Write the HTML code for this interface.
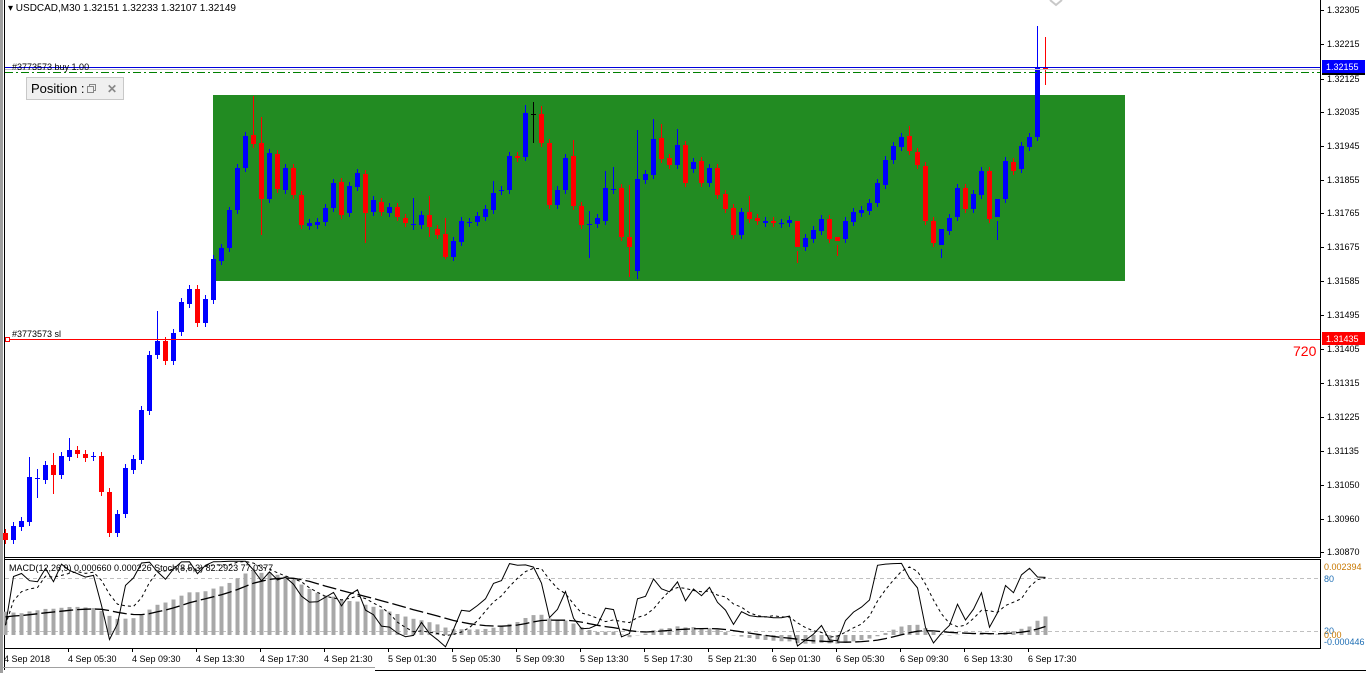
<!DOCTYPE html>
<html><head><meta charset="utf-8"><style>
body{margin:0;width:1366px;height:673px;overflow:hidden;background:#fff;font-family:"Liberation Sans",sans-serif}
svg text{font-family:"Liberation Sans",sans-serif}
</style></head><body>
<svg id="s" width="1366" height="673" xmlns="http://www.w3.org/2000/svg">
<rect x="0" y="0" width="1366" height="673" fill="#fff"/>
<rect x="0" y="0" width="3" height="673" fill="#a0a0a0"/>
<line x1="4.5" y1="0" x2="4.5" y2="670" stroke="#000"/>
<rect x="213" y="95" width="912" height="186" fill="#228B22"/>
<g id="candles"></g>
<line x1="5" y1="67.5" x2="1320" y2="67.5" stroke="#0000dd"/>
<line x1="5" y1="69.5" x2="1320" y2="69.5" stroke="#c0c0c0"/>
<line x1="5" y1="72.5" x2="1320" y2="72.5" stroke="#008000" stroke-dasharray="8,3,2,3"/>
<line x1="5" y1="339.5" x2="1320" y2="339.5" stroke="#ff0000"/>
<rect x="5.5" y="337.5" width="4" height="4" fill="#fff" stroke="#f00"/>
<text x="12" y="70" font-size="9" fill="#000">#3773573 buy 1.00</text>
<text x="12" y="337" font-size="9" fill="#000">#3773573 sl</text>
<text x="1293" y="356" font-size="14" fill="#f00">720</text>
<text x="8" y="11" font-size="10" fill="#000">▾ USDCAD,M30  1.32151 1.32233 1.32107 1.32149</text>
<rect x="26.5" y="77.5" width="97" height="22" fill="#f0f0f0" stroke="#c8c8c8"/>
<text x="31" y="93" font-size="13" fill="#000">Position :</text>
<rect x="88" y="84" width="9" height="9" fill="#f0f0f0"/>
<rect x="89.5" y="84.5" width="6" height="6" fill="none" stroke="#888"/>
<rect x="87.5" y="86.5" width="6" height="6" fill="#f0f0f0" stroke="#888"/>
<text x="107" y="93" font-size="12" fill="#888" font-weight="bold">✕</text>
<path d="M1050 0 L1056 5 L1062 0" fill="none" stroke="#c8c8c8" stroke-width="2"/>
<line x1="1320.5" y1="0" x2="1320.5" y2="558" stroke="#000"/>
<line x1="5" y1="557.5" x2="1320" y2="557.5" stroke="#000"/>
<g id="axis" font-size="9" fill="#000"></g>
<rect x="1322" y="60" width="43" height="13" fill="#0000ff"/>
<text x="1326" y="70" font-size="9" fill="#fff">1.32155</text>
<rect x="1322" y="73" width="43" height="2" fill="#000"/>
<rect x="1322" y="332" width="43" height="13" fill="#ff0000"/>
<text x="1326" y="342" font-size="9" fill="#fff">1.31435</text>
<line x1="5" y1="559.5" x2="1320" y2="559.5" stroke="#000"/>
<line x1="5" y1="648.5" x2="1320" y2="648.5" stroke="#000"/>
<line x1="1320.5" y1="559" x2="1320.5" y2="649" stroke="#000"/>
<line x1="5" y1="578.5" x2="1320" y2="578.5" stroke="#c0c0c0" stroke-dasharray="4,3"/>
<line x1="5" y1="631.5" x2="1320" y2="631.5" stroke="#c0c0c0" stroke-dasharray="4,3"/>
<g id="ind"></g>
<text x="9" y="571" font-size="9" fill="#000">MACD(12,26,9) 0.000660 0.000226  Stoch(8,5,3) 82.2923 77.0377</text>
<text x="1324" y="570" font-size="9" fill="#c87800">0.002394</text>
<text x="1324" y="582" font-size="9" fill="#1e6eb4">80</text>
<text x="1324" y="634" font-size="9" fill="#1e6eb4">20</text>
<text x="1324" y="638" font-size="9" fill="#c87800">0.00</text>
<text x="1324" y="645" font-size="9" fill="#1e6eb4">-0.000446</text>
<g id="dates" font-size="9" fill="#000"></g>
<line x1="375" y1="670.5" x2="1366" y2="670.5" stroke="#000"/>
<line x1="0" y1="667.5" x2="375" y2="667.5" stroke="#a0a0a0"/>
</svg>
<script>
var D=[[533,540,0],[526,540,1],[521,527,1],[477,522,1,457],[478,479,2,469,498],[465,480,1],[465,475,0,453,494],[456,475,1],[450,457,1,438],[450,454,0],[454,458,0],[456,457,2],[456,492,0],[492,533,0],[514,533,1],[468,514,1],[459,470,1],[410,460,1],[355,411,1],[341,355,1,311],[341,361,0],[333,361,1],[302,332,1],[289,304,1],[289,323,0],[299,323,1],[259,300,1],[248,261,1],[210,248,1,207],[168,210,1],[136,168,1],[135,144,0,96],[143,199,0,117,235],[153,199,1],[154,189,0],[168,190,1],[168,195,0],[195,225,0],[223,226,1],[222,225,1],[208,222,1],[183,208,1],[182,215,0],[186,213,1],[173,187,1],[174,213,0,170,243],[200,212,1],[202,212,0],[207,213,1],[207,217,0],[218,223,0],[224,225,2,198,230],[215,225,1],[215,227,0,196,237],[229,235,0],[234,257,0,218,259],[241,257,1],[221,242,1],[222,223,2],[216,222,1],[209,217,1],[193,210,1,181],[190,191,2],[156,190,1],[156,158,0],[113,157,1,105],[114,115,3,102,143],[114,143,0,106],[143,205,0],[190,205,1],[158,190,1],[156,206,0,140],[206,225,0],[224,225,2,211,258],[218,224,1],[188,221,1,171],[189,190,2,167],[188,237,0],[237,247,0,185,277],[179,271,1,130,279],[174,180,1],[139,175,1,119],[138,159,0,124],[158,165,0],[145,165,1,129],[145,183,0],[162,169,1],[161,183,0],[168,183,1],[168,195,0],[194,209,0],[208,235,0],[212,235,1],[212,219,0,196],[218,221,0],[221,223,1],[221,223,0],[223,224,2],[220,223,1],[221,247,0,263],[238,247,1],[230,239,1],[219,231,1],[219,239,0],[237,241,0,256],[221,239,1],[212,222,1],[210,213,1],[203,211,1],[183,203,1],[160,185,1],[146,160,1],[137,147,1],[136,151,0,126],[152,165,0],[166,221,0],[221,243,0],[229,245,1,258],[218,231,1],[188,217,1],[188,209,0],[194,209,1],[171,195,1],[171,219,0],[199,217,1,240],[161,199,1],[162,171,0],[146,169,1],[137,147,1],[68,137,1,26],[68,69,0,37,85]];
var g=document.getElementById('candles'),h='';
var col=['#ff0000','#0000ff','#0000ff','#000'];
D.forEach(function(d,i){var x=5.5+8*i,c=col[d[2]];var wt=d[3]||d[0]-4,wb=d[4]||d[1]+4;
h+='<line x1="'+x+'" y1="'+wt+'" x2="'+x+'" y2="'+wb+'" stroke="'+c+'"/>';
var bh=Math.max(1,d[1]-d[0]);h+='<rect x="'+(x-2.5)+'" y="'+d[0]+'" width="5" height="'+bh+'" fill="'+c+'"/>';});
g.innerHTML=h;
var ax='',lab=['1.32305','1.32215','1.32125','1.32035','1.31945','1.31855','1.31765','1.31675','1.31585','1.31495','1.31405','1.31315','1.31225','1.31135','1.31050','1.30960','1.30870'];
lab.forEach(function(l,i){var y=Math.round(10+i*33.9);if(l=='1.32125')y=79;ax+='<line x1="1320" y1="'+(y+.5)+'" x2="1324" y2="'+(y+.5)+'" stroke="#000"/><text x="1327" y="'+(y+3)+'">'+l+'</text>';});
document.getElementById('axis').innerHTML=ax;
var dl=['4 Sep 2018','4 Sep 05:30','4 Sep 09:30','4 Sep 13:30','4 Sep 17:30','4 Sep 21:30','5 Sep 01:30','5 Sep 05:30','5 Sep 09:30','5 Sep 13:30','5 Sep 17:30','5 Sep 21:30','6 Sep 01:30','6 Sep 05:30','6 Sep 09:30','6 Sep 13:30','6 Sep 17:30'],dh='';
dl.forEach(function(l,i){var x=4+64*i;dh+='<line x1="'+(x+.5)+'" y1="648" x2="'+(x+.5)+'" y2="652" stroke="#000"/><text x="'+x+'" y="662">'+l+'</text>';});
document.getElementById('dates').innerHTML=dh;
function P(y){return 1.32305-(y-10)/37700;}
var C=[],H=[],L=[];D.forEach(function(d){var cl=d[2]==0?d[1]:d[0];C.push(P(cl));H.push(P(d[3]||d[0]-4));L.push(P(d[4]||d[1]+4));});
var e12=C[0],e26=C[0]-0.0009,M=[],S=[],sg=0.0006;
C.forEach(function(c){e12+=(c-e12)*2/13;e26+=(c-e26)*2/27;var m=e12-e26;M.push(m);sg+=(m-sg)*0.2;S.push(sg);});
function my(v){return 635-v*28000;}
var ih='';M.forEach(function(m,i){var x=5.5+8*i,y=my(m);ih+='<rect x="'+(x-2)+'" y="'+Math.min(y,635)+'" width="4" height="'+Math.abs(635-y)+'" fill="#a8a8a8"/>';});
var sp='';S.forEach(function(s,i){sp+=(i?'L':'M')+(5.5+8*i)+' '+my(s).toFixed(1);});
ih+='<path d="'+sp+'" fill="none" stroke="#000" stroke-width="1.3" stroke-dasharray="14,4"/>';
var K=[],Kr=[],KP=20,SL=8,DP=5;
C.forEach(function(c,i){var a=Math.max(0,i-KP+1),hh=-1,ll=9;for(var j=a;j<=i;j++){hh=Math.max(hh,H[j]);ll=Math.min(ll,L[j]);}Kr.push([c-ll,hh-ll]);});
Kr.forEach(function(r,i){var a=Math.max(0,i-SL+1),n=0,d=0;for(var j=a;j<=i;j++){n+=r[0];d+=r[1];}K.push(d?100*n/d:50);});
var Dd=K.map(function(k,i){var a=Math.max(0,i-DP+1),s=0;for(var j=a;j<=i;j++)s+=K[j];return s/(i-a+1);});
function sy(v){return 648.7-v*0.883;}
var kp='',dp='';K.forEach(function(k,i){kp+=(i?'L':'M')+(5.5+8*i)+' '+sy(k).toFixed(1);dp+=(i?'L':'M')+(5.5+8*i)+' '+sy(Dd[i]).toFixed(1);});
ih+='<path d="'+kp+'" fill="none" stroke="#000" stroke-width="1"/><path d="'+dp+'" fill="none" stroke="#000" stroke-width="1" stroke-dasharray="3,3"/>';
document.getElementById('ind').innerHTML=ih;
</script>
</body></html>
